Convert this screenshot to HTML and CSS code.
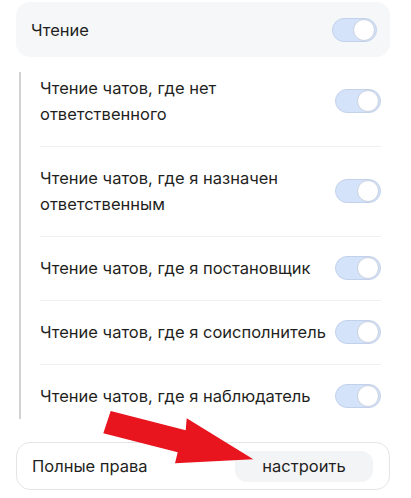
FILE: index.html
```html
<!DOCTYPE html>
<html lang="ru">
<head>
<meta charset="utf-8">
<title>Права</title>
<link rel="stylesheet" href="styles.css">
</head>
<body>
<div class="page">
  <div class="card-main">
    <span class="title">Чтение</span>
    <span class="toggle"><span class="knob"></span></span>
  </div>
  <div class="list">
    <div class="row first">
      <span class="label">Чтение чатов, где нет ответственного</span>
      <span class="toggle"><span class="knob"></span></span>
    </div>
    <div class="row">
      <span class="label">Чтение чатов, где я назначен ответственным</span>
      <span class="toggle"><span class="knob"></span></span>
    </div>
    <div class="row">
      <span class="label">Чтение чатов, где я постановщик</span>
      <span class="toggle"><span class="knob"></span></span>
    </div>
    <div class="row">
      <span class="label">Чтение чатов, где я соисполнитель</span>
      <span class="toggle"><span class="knob"></span></span>
    </div>
    <div class="row last">
      <span class="label">Чтение чатов, где я наблюдатель</span>
      <span class="toggle"><span class="knob"></span></span>
    </div>
  </div>
  <div class="card-bottom">
    <span class="title">Полные права</span>
    <button class="btn">настроить</button>
  </div>
  <svg class="arrow" width="411" height="498" viewBox="0 0 411 498">
    <polygon points="110.7,411 185.7,430.3 186.7,418.3 253.3,459.3 175,463.3 177.7,452.3 103.3,433.3" fill="#e8151f"/>
  </svg>
</div>
</body>
</html>
```
FILE: styles.css
```css
* { box-sizing: border-box; }
html, body {
  margin: 0;
  padding: 0;
  background: #ffffff;
}
body {
  font-family: Inter, "Noto Sans", "Liberation Sans", sans-serif;
  font-size: 16.5px;
  color: #1f1f22;
}
.page {
  position: relative;
  width: 411px;
  height: 498px;
  padding: 2px 21px 0 16px;
  overflow: hidden;
}
.card-main {
  height: 55px;
  background: #f6f7f9;
  border-radius: 14px;
  display: flex;
  align-items: center;
  justify-content: space-between;
  padding: 0 13px 0 15px;
}
.toggle {
  position: relative;
  flex: 0 0 auto;
  width: 46px;
  height: 24px;
  border-radius: 12px;
  background: #d5e3fa;
  border: 1px solid #c3d2ea;
}
.knob {
  position: absolute;
  right: 1px;
  top: 0px;
  width: 22px;
  height: 22px;
  border-radius: 50%;
  background: #ffffff;
  border: 1px solid #c9d2de;
}
.card-main .toggle { width: 45px; }
.list {
  margin: 15px 9px 0 3px;
  border-left: 2px solid #d3d3d3;
  padding-left: 19px;
}
.row {
  display: flex;
  align-items: center;
  justify-content: space-between;
  gap: 6px;
  padding: 18px 0 19px;
  border-bottom: 1px solid #eff0f2;
}
.row.first { padding-top: 3px; }
.row.last { border-bottom: none; padding-bottom: 10px; }
.label {
  line-height: 26px;
  flex: 1 1 auto;
  max-width: 296px;
}
.card-bottom {
  margin-top: 23px;
  height: 48px;
  border: 1px solid #e3e5e9;
  border-radius: 14px;
  display: flex;
  align-items: center;
  justify-content: space-between;
  padding: 0 16px 0 15px;
}
.btn {
  width: 138px;
  height: 31px;
  border: none;
  border-radius: 12px;
  background: #f3f4f6;
  font-family: inherit;
  font-size: 16.5px;
  color: #1f1f22;
  padding: 0;
}
.arrow {
  position: absolute;
  left: 0;
  top: 0;
  pointer-events: none;
}
```
